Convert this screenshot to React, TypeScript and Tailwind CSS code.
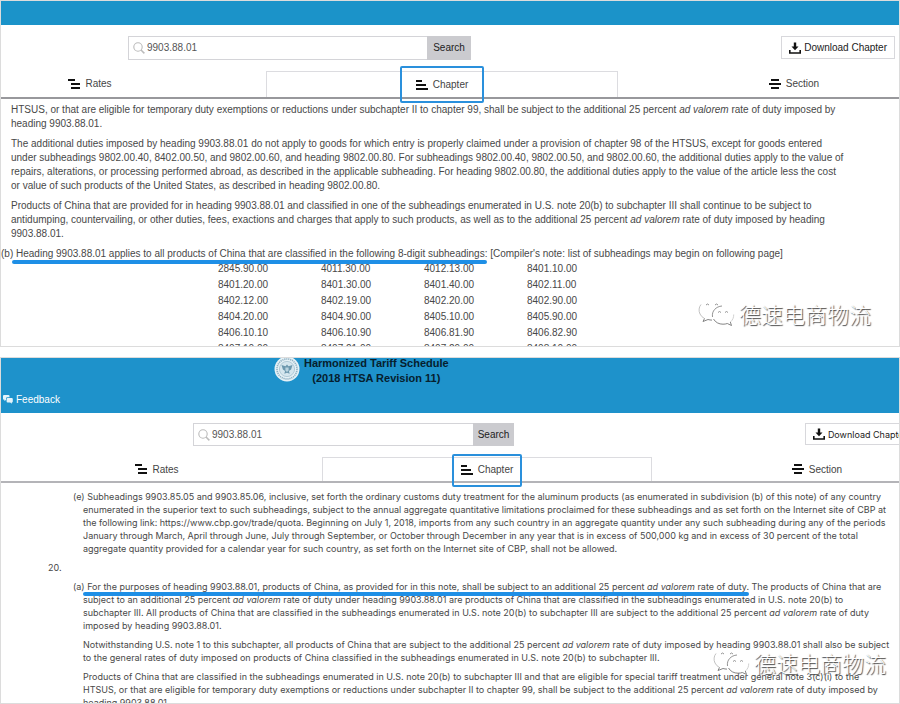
import type { ReactNode } from "react";

type Kind = "rates" | "chapter" | "section";

const BARS: Record<Kind, [number, number][]> = {
  rates: [
    [0, 7],
    [3, 9],
    [3, 9],
  ],
  chapter: [
    [0, 6],
    [0, 10],
    [0, 12],
  ],
  section: [
    [2, 8],
    [0, 12],
    [2, 8],
  ],
};

function LinesIcon({ kind }: { kind: Kind }) {
  return (
    <svg width="12" height="10" viewBox="0 0 12 10" aria-hidden="true" className="shrink-0">
      {BARS[kind].map(([x, w], i) => (
        <rect key={i} x={x} y={i * 4} width={w} height="2" fill="#111" />
      ))}
    </svg>
  );
}

function SearchIcon() {
  return (
    <svg width="12" height="12" viewBox="0 0 12 12" fill="none" stroke="#bbb" aria-hidden="true">
      <circle cx="5" cy="5" r="4.2" strokeWidth="1.1" />
      <path d="M8 8l3.4 3.4" strokeWidth="1.5" />
    </svg>
  );
}

function DownloadIcon() {
  return (
    <svg width="12" height="12" viewBox="0 0 12 12" aria-hidden="true" className="shrink-0">
      <path d="M4.8 0.5h2.4v4h2.3L6 8.3 2.5 4.5h2.3z" fill="#111" />
      <path d="M0.8 8v3h10.4V8" fill="none" stroke="#111" strokeWidth="1.6" />
    </svg>
  );
}

function Seal() {
  return (
    <svg width="26" height="26" viewBox="0 0 26 26" aria-hidden="true">
      <circle cx="13" cy="13" r="12.5" fill="#e6f1f6" />
      <circle cx="13" cy="13" r="10" fill="none" stroke="#8fb0c2" strokeWidth="1.6" strokeDasharray="1.2 0.8" />
      <circle cx="13" cy="13" r="7.6" fill="#d5e6ee" stroke="#9dbccb" strokeWidth="0.7" />
      <path d="M7.5 9l4 1.2L13 8.600l1.500 1.600 4-1.200-1.400 4.600-2.200 1.400.8 2.800-2.700-1-2.700 1 .8-2.800-2.200-1.400z" fill="#6d98ae" />
      <path d="M11.4 11.5h3.2v3L13 16l-1.600-1.500z" fill="#b9d3df" />
    </svg>
  );
}

function FeedbackIcon() {
  return (
    <svg width="10" height="9" viewBox="0 0 10 9" fill="#e4f3fa" aria-hidden="true">
      <path d="M1 0h4.500q1 0 1 1v1.200H4.400q-1.400 0-1.400 1.400V5L1.400 6V4.700H1q-1 0-1-1V1q0-1 1-1z" />
      <path d="M4.600 3h4.200q1 0 1 1v2.400q0 1-1 1v1.300L7.200 7.400H4.600q-1 0-1-1V4q0-1 1-1z" />
    </svg>
  );
}

function Watermark({ className }: { className: string }) {
  return (
    <div className={`pointer-events-none absolute flex items-center gap-1 ${className}`}>
      <svg width="37" height="28" viewBox="0 0 37 28" aria-hidden="true">
        <g fill="#fff" stroke="none">
          <path d="M14 1C7 1 1 5.500 1 11.500c0 3.500 2 6.300 5 8.300L4.500 23l5-2.200c1.500.5 3 .7 4.500.7 7 0 13-4.500 13-10S21 1 14 1z" />
          <path d="M25 7c-6 0-11 4-11 9s5 9 11 9c1.500 0 3-.2 4.300-.7l4.200 2.200-1.200-3.500c2.300-1.700 3.700-4 3.700-7 0-5-5-9-11-9z" />
        </g>
        <g fill="none" strokeWidth="0.9">
          <path d="M3 5.500C.8 8 .5 12 2 15q1.500 3 4.500 4.500" stroke="#bbb" />
          <path d="M6.500 19.500L5 22.500l5-2q2 .6 4 .6" stroke="#777" />
          <path d="M14.500 18C13.500 12 18 7.500 24 7" stroke="#888" />
          <path d="M15.500 20c2 3.500 5.500 5.200 9.500 5.200 1.500 0 3-.2 4.300-.7l4.200 2-1.200-3.500" stroke="#777" />
          <path d="M32.300 23c2.500-2 3.500-4.500 3.400-7.500" stroke="#ccc" />
          <path d="M8 6q1.500-2 3 0M17 6q1.500-2 3 0M20 13.500q1.500-2 3 0M27 13.500q1.500-2 3 0" stroke="#888" />
        </g>
      </svg>
      <span
        lang="zh"
        className="whitespace-nowrap font-['Noto_Sans_CJK_SC',sans-serif] text-[22px] font-light leading-[28px] text-white [text-shadow:1px_1px_1px_#444]"
      >
        德速电商物流
      </span>
    </div>
  );
}

function SearchBar({ id, className, button }: { id: string; className: string; button: string }) {
  return (
    <form className={`flex ${className}`} onSubmit={(e) => e.preventDefault()}>
      <label htmlFor={id} className="flex items-center border border-r-0 border-[#d4d4d8] bg-white pl-1">
        <SearchIcon />
      </label>
      <input
        id={id}
        type="text"
        aria-label="Search"
        defaultValue="9903.88.01"
        className="min-w-0 flex-1 border border-x-0 border-[#d4d4d8] bg-white px-[2px] text-[#555] outline-none"
      />
      <button type="submit" className={`bg-[#cbcbcf] text-[#222] ${button}`}>
        Search
      </button>
    </form>
  );
}

function DownloadButton({ className }: { className: string }) {
  return (
    <button
      type="button"
      className={`flex shrink-0 items-center gap-[3px] whitespace-nowrap border border-[#d8d8dc] bg-white px-[7px] text-[#222] ${className}`}
    >
      <DownloadIcon />
      Download Chapter
    </button>
  );
}

function Tabs({ margins, row, box, line }: { margins: string; row: string; box: string; line: string }) {
  return (
    <div className={`border-b-2 ${line}`}>
      <nav className={`grid grid-cols-3 text-[#444] ${row} ${margins}`}>
        <button type="button" className="flex items-center justify-center gap-[5px]">
          <LinesIcon kind="rates" />
          Rates
        </button>
        <button
          type="button"
          className="relative flex items-center justify-center gap-[5px] border border-b-0 border-[#dcdce0]"
        >
          <LinesIcon kind="chapter" />
          Chapter
          <span className={`absolute left-1/2 -translate-x-1/2 rounded-[2px] border-2 border-[#2a90dc] ${box}`} />
        </button>
        <button type="button" className="flex items-center justify-center gap-[5px]">
          <LinesIcon kind="section" />
          Section
        </button>
      </nav>
    </div>
  );
}

function Marked({ children }: { children: ReactNode }) {
  return (
    <span className="relative inline-block">
      {children}
      <span className="absolute -left-1 right-0 top-full -mt-px h-1 rounded-sm bg-[#1e8fe6]" />
    </span>
  );
}

function Line({ children }: { children: ReactNode }) {
  return <span className="block whitespace-nowrap">{children}</span>;
}

const AdValorem = () => <em>ad valorem</em>;

const CODES = [
  ["2845.90.00", "4011.30.00", "4012.13.00", "8401.10.00"],
  ["8401.20.00", "8401.30.00", "8401.40.00", "8402.11.00"],
  ["8402.12.00", "8402.19.00", "8402.20.00", "8402.90.00"],
  ["8404.20.00", "8404.90.00", "8405.10.00", "8405.90.00"],
  ["8406.10.10", "8406.10.90", "8406.81.90", "8406.82.90"],
  ["8407.10.00", "8407.21.00", "8407.29.00", "8408.10.00"],
];

function FirstPanel() {
  return (
    <section className="relative min-h-0 flex-1 overflow-hidden border border-[#dcdcdc] text-[10px] leading-[14px]">
      <header className="h-6 bg-[#1b93c9]" />
      <div className="flex items-start justify-between py-[11px] pl-[127px] pr-1">
        <SearchBar id="search-top" className="h-6 w-[343px]" button="w-11" />
        <DownloadButton className="h-[23px]" />
      </div>
      <Tabs margins="-ml-[87px] -mr-[71px]" row="h-[26px]" box="-top-[6px] h-[37px] w-[84px]" line="border-[#98989c]" />
      <div className="flex flex-col gap-[6px] pl-[10px] pt-1 text-[#484848]">
        <p>
          <Line>
            HTSUS, or that are eligible for temporary duty exemptions or reductions under subchapter II to chapter 99,
            shall be subject to the additional 25 percent <AdValorem /> rate of duty imposed by
          </Line>
          <Line>heading 9903.88.01.</Line>
        </p>
        <p>
          <Line>
            The additional duties imposed by heading 9903.88.01 do not apply to goods for which entry is properly claimed
            under a provision of chapter 98 of the HTSUS, except for goods entered
          </Line>
          <Line>
            under subheadings 9802.00.40, 8402.00.50, and 9802.00.60, and heading 9802.00.80. For subheadings 9802.00.40,
            9802.00.50, and 9802.00.60, the additional duties apply to the value of
          </Line>
          <Line>
            repairs, alterations, or processing performed abroad, as described in the applicable subheading. For heading
            9802.00.80, the additional duties apply to the value of the article less the cost
          </Line>
          <Line>or value of such products of the United States, as described in heading 9802.00.80.</Line>
        </p>
        <p>
          <Line>
            Products of China that are provided for in heading 9903.88.01 and classified in one of the subheadings
            enumerated in U.S. note 20(b) to subchapter III shall continue to be subject to
          </Line>
          <Line>
            antidumping, countervailing, or other duties, fees, exactions and charges that apply to such products, as well
            as to the additional 25 percent <AdValorem /> rate of duty imposed by heading
          </Line>
          <Line>9903.88.01.</Line>
        </p>
        <div>
          <p className="-ml-[10px] whitespace-nowrap">
            (b){" "}
            <Marked>
              Heading 9903.88.01 applies to all products of China that are classified in the following 8-digit
              subheadings:
            </Marked>{" "}
            [Compiler's note: list of subheadings may begin on following page]
          </p>
          <table className="ml-[207px] w-[412px] table-fixed leading-[16px]">
            <tbody>
              {CODES.map((row) => (
                <tr key={row[0]}>
                  {row.map((code) => (
                    <td key={code} className="p-0">
                      {code}
                    </td>
                  ))}
                </tr>
              ))}
            </tbody>
          </table>
        </div>
      </div>
      <Watermark className="bottom-[19px] right-[28px]" />
    </section>
  );
}

function SecondPanel() {
  return (
    <section className="relative min-h-0 flex-1 overflow-hidden border border-[#dcdcdc] text-[10px] leading-[13px]">
      <header className="flex h-[55px] flex-col justify-between bg-[#1e92cb] pb-[7px]">
        <div className="-mt-[2px] flex items-start gap-1 pl-[273px]">
          <Seal />
          <h1 className="text-center text-[11px] font-bold leading-[15px] text-[#06202e]">
            Harmonized Tariff Schedule
            <br />
            (2018 HTSA Revision 11)
          </h1>
        </div>
        <a href="#feedback" className="flex items-center gap-[3px] self-start pl-[2px] text-white">
          <FeedbackIcon />
          Feedback
        </a>
      </header>
      <div className="flex items-start pb-[11px] pl-[192px] pt-[10px]">
        <SearchBar id="search-bottom" className="h-[23px] w-[321px] shrink-0" button="w-[41px]" />
        <DownloadButton className="-mr-4 ml-auto h-[22px] font-[Inter,'Liberation_Sans',sans-serif] text-[9px]" />
      </div>
      <Tabs margins="-ml-[9px] -mr-[83px]" row="h-6" box="-top-1 h-[33px] w-[70px]" line="border-[#b4b4b8]" />
      <div className="flex flex-col gap-[6px] pl-[82px] pt-[7px] font-[Inter,'Liberation_Sans',sans-serif] text-[9px] text-[#484848]">
        <div>
          <p className="-ml-[10px] whitespace-nowrap">
            (e) Subheadings 9903.85.05 and 9903.85.06, inclusive, set forth the ordinary customs duty treatment for the
            aluminum products (as enumerated in subdivision (b) of this note) of any country
          </p>
          <Line>
            enumerated in the superior text to such subheadings, subject to the annual aggregate quantitative limitations
            proclaimed for these subheadings and as set forth on the Internet site of CBP at
          </Line>
          <Line>
            the following link: https://www.cbp.gov/trade/quota. Beginning on July 1, 2018, imports from any such country
            in an aggregate quantity under any such subheading during any of the periods
          </Line>
          <Line>
            January through March, April through June, July through September, or October through December in any year
            that is in excess of 500,000 kg and in excess of 30 percent of the total
          </Line>
          <Line>
            aggregate quantity provided for a calendar year for such country, as set forth on the Internet site of CBP,
            shall not be allowed.
          </Line>
        </div>
        <p className="-ml-[35px]">20.</p>
        <div>
          <p className="-ml-[10px] whitespace-nowrap">
            (a){" "}
            <Marked>
              For the purposes of heading 9903.88.01, products of China, as provided for in this note, shall be subject
              to an additional 25 percent <AdValorem /> rate of duty.
            </Marked>{" "}
            The products of China that are
          </p>
          <Line>
            subject to an additional 25 percent <AdValorem /> rate of duty under heading 9903.88.01 are products of China
            that are classified in the subheadings enumerated in U.S. note 20(b) to
          </Line>
          <Line>
            subchapter III. All products of China that are classified in the subheadings enumerated in U.S. note 20(b) to
            subchapter III are subject to the additional 25 percent <AdValorem /> rate of duty
          </Line>
          <Line>imposed by heading 9903.88.01.</Line>
        </div>
        <p>
          <Line>
            Notwithstanding U.S. note 1 to this subchapter, all products of China that are subject to the additional 25
            percent <AdValorem /> rate of duty imposed by heading 9903.88.01 shall also be subject
          </Line>
          <Line>
            to the general rates of duty imposed on products of China classified in the subheadings enumerated in U.S.
            note 20(b) to subchapter III.
          </Line>
        </p>
        <p>
          <Line>
            Products of China that are classified in the subheadings enumerated in U.S. note 20(b) to subchapter III and
            that are eligible for special tariff treatment under general note 3(c)(i) to the
          </Line>
          <Line>
            HTSUS, or that are eligible for temporary duty exemptions or reductions under subchapter II to chapter 99,
            shall be subject to the additional 25 percent <AdValorem /> rate of duty imposed by
          </Line>
          <Line>heading 9903.88.01.</Line>
        </p>
      </div>
      <Watermark className="bottom-[27px] right-[13px]" />
    </section>
  );
}

export default function App() {
  return (
    <main className="flex h-screen flex-col gap-[10px] bg-white font-['Liberation_Sans',Arial,sans-serif]">
      <FirstPanel />
      <SecondPanel />
    </main>
  );
}
